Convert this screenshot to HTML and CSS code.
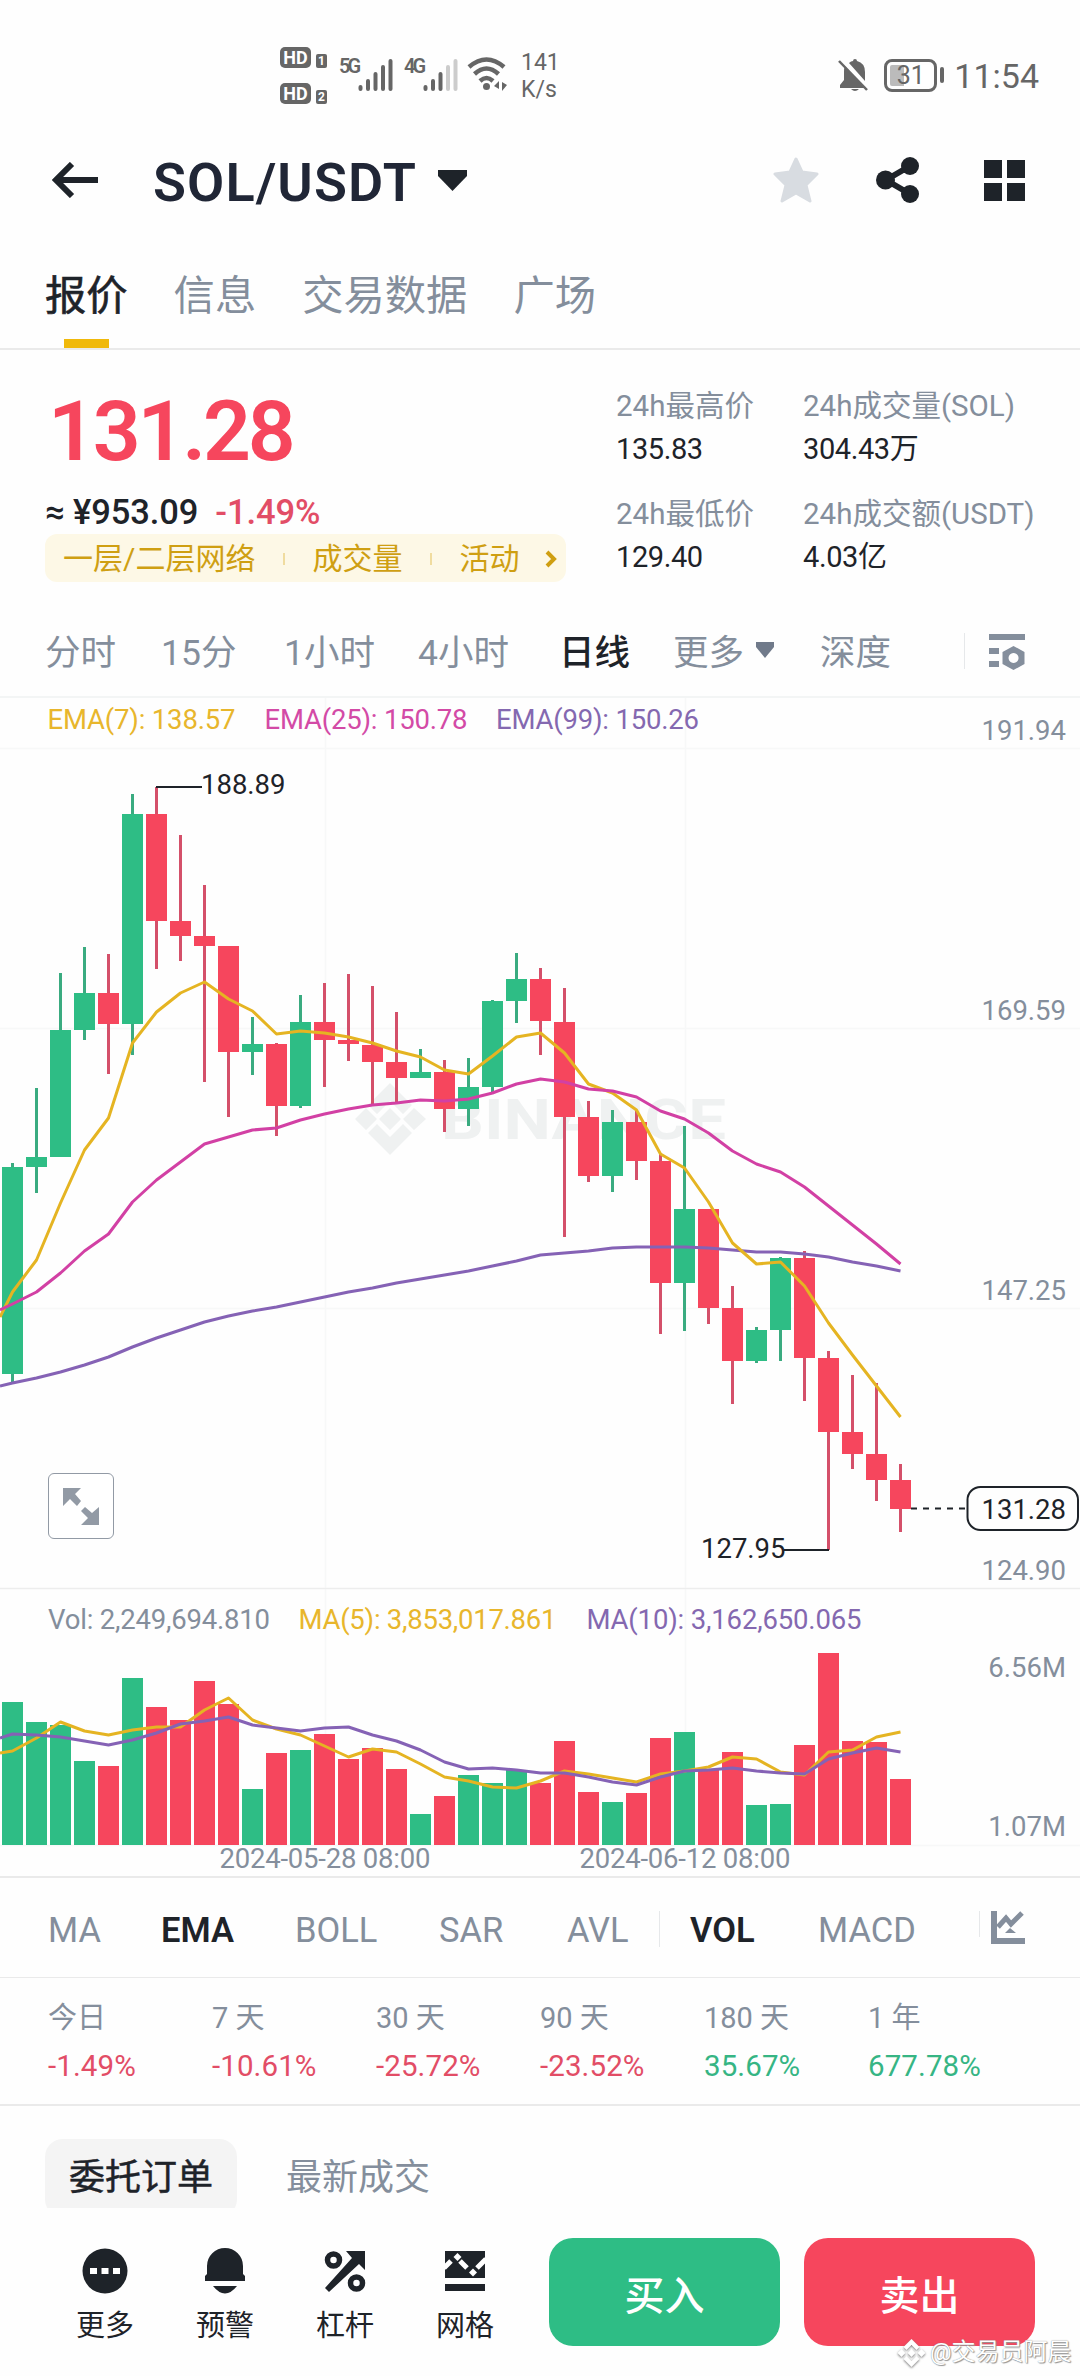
FILE: index.html
```html
<!DOCTYPE html>
<html lang="zh-CN">
<head>
    <meta charset="UTF-8">
    <meta name="viewport" content="width=device-width, initial-scale=1.0">
    <title>SOL/USDT</title>
    <link rel="stylesheet" href="styles.css">
</head>
<body>
    <div class="status-bar">
        <div class="status-left">
            <div class="hd-list">
                <div class="hd"><span class="hd-label">HD</span><span class="hd-sim">1</span></div>
                <div class="hd"><span class="hd-label">HD</span><span class="hd-sim">2</span></div>
            </div>
            <span class="net">5G</span>
            <svg class="signal" width="36" height="34" viewBox="0 0 36 34" fill="none" stroke="#666" stroke-width="4" stroke-linecap="round">
                <path d="M2.5 29v2M10 23v8M17.500 16v15M25 9v22M32.500 3v28"/>
            </svg>
            <span class="net net-4g">4G</span>
            <svg class="signal" width="36" height="34" viewBox="0 0 36 34" fill="none" stroke="#666" stroke-width="4" stroke-linecap="round">
                <path d="M2.500 29v2M10 23v8M17.500 16v15"/>
                <path d="M25 9v22M32.500 3v28" stroke="#ccc"/>
            </svg>
            <svg class="wifi" width="42" height="34" viewBox="0 0 42 34" fill="none" stroke="#666" stroke-width="4.500">
                <path d="M2 10q17.500-15 35 0M7.500 17q12-11 24 0M13 24q6.500-6 13 0"/>
                <circle cx="19.500" cy="29.500" r="3.500" fill="#666" stroke="none"/>
                <path d="M27 29l5-5v8zM40 28l-5-3v9z" fill="#666" stroke="none"/>
            </svg>
            <div class="speed"><span>141</span><span>K/s</span></div>
        </div>
        <div class="status-right">
            <svg width="32" height="34" viewBox="0 0 32 34" fill="#666">
                <path d="M5 6L27 30H2v-3l4-5V14q0-4 1-6M11 5q2-2 4-2 0-2 2-2t2 2q8 2 8 11v9zM13 31h8q-4 4-8 0z"/>
                <path d="M1 3l28 29" stroke="#666" stroke-width="2.500"/>
            </svg>
            <div class="battery"><span>31</span></div>
            <span class="clock">11:54</span>
        </div>
    </div>

    <header class="header">
        <svg class="back" width="46" height="36" viewBox="0 0 46 36" fill="none" stroke="#1e2329" stroke-width="6">
            <path d="M46 18H5M20 2L4 18l16 16"/>
        </svg>
        <h1 class="pair">SOL/USDT</h1>
        <svg class="caret" width="29" height="21" viewBox="0 0 29 21" fill="#1e2329"><path d="M0 0h29v6L14.500 21 0 6z"/></svg>
        <div class="header-actions">
            <svg width="46" height="46" viewBox="0 0 46 46" fill="#d8dce1" stroke="#d8dce1" stroke-width="3" stroke-linejoin="round">
                <path d="M23 2l6 13 15 2-11 11 4 16-14-8-14 8 4-16L2 17l15-2z"/>
            </svg>
            <svg width="44" height="46" viewBox="0 0 44 46" fill="#1e2329">
                <path d="M34 9L10 23l24 14" fill="none" stroke="#1e2329" stroke-width="6"/>
                <circle cx="34" cy="9" r="9"/><circle cx="9.500" cy="23" r="9.500"/><circle cx="34" cy="37" r="9"/>
            </svg>
            <svg width="41" height="41" viewBox="0 0 41 41" fill="#1e2329">
                <path d="M0 0h18v18H0zM23 0h18v18H23zM0 23h18v18H0zM23 23h18v18H23z"/>
            </svg>
        </div>
    </header>

    <nav class="tabs">
        <span class="tab active">报价</span>
        <span class="tab">信息</span>
        <span class="tab">交易数据</span>
        <span class="tab">广场</span>
    </nav>

    <section class="ticker">
        <div class="ticker-main">
            <div class="price">131.28</div>
            <div class="fiat">≈ ¥953.09<span class="change">-1.49%</span></div>
            <div class="tags">
                <span>一层/二层网络</span><i></i><span>成交量</span><i></i><span>活动</span>
                <svg width="12" height="18" viewBox="0 0 12 18" fill="none" stroke="#cf9f12" stroke-width="4"><path d="M2 2l7 7-7 7"/></svg>
            </div>
        </div>
        <dl class="stats">
            <div><dt>24h最高价</dt><dd>135.83</dd></div>
            <div><dt>24h成交量(SOL)</dt><dd>304.43万</dd></div>
            <div><dt>24h最低价</dt><dd>129.40</dd></div>
            <div><dt>24h成交额(USDT)</dt><dd>4.03亿</dd></div>
        </dl>
    </section>

    <div class="intervals">
        <span>分时</span>
        <span>15分</span>
        <span>1小时</span>
        <span>4小时</span>
        <span class="active">日线</span>
        <span>更多<svg class="more-caret" width="18" height="16" viewBox="0 0 18 16" fill="#707a8a"><path d="M0 0h18v5L9 16 0 5z"/></svg></span>
        <span>深度</span>
        <svg class="settings" width="36" height="36" viewBox="0 0 36 36" fill="#848e9c">
            <path d="M0 0h36v6H0zM0 14h10v6H0zM0 27h10v6H0z"/>
            <path fill-rule="evenodd" d="M24.500 12l11 6v12l-11 6-11-6V18zM24.500 19a5 5 0 1 0 .1 0z"/>
        </svg>
    </div>

    <div class="chart">
        <svg id="chart" width="1080" height="1178" viewBox="0 698 1080 1178">
            <g class="grid">
                <path d="M0 748.500H1080M0 1028.500H1080M0 1308.500H1080M0 1845.500H1080M325.500 698V1845M685.500 698V1845"/>
                <path class="grid-strong" d="M0 1588.500H1080"/>
            </g>
            <g class="logo">
                <path d="M390 1083l22 22-9 9-13-13-13 13-9-9zM390 1155l-22-22 9-9 13 13 13-13 9 9zM390 1108l11 11-11 11-11-11zM366 1108l11 11-11 11-11-11zM414 1108l12 11-12 11-11-11z"/>
                <text x="441" y="1139" textLength="285" lengthAdjust="spacingAndGlyphs">BINANCE</text>
            </g>
            <g id="candles"></g>
            <g id="volumes"></g>
            <g id="lines"></g>
            <g class="legend">
                <text class="ema7" x="47.500" y="729" textLength="188">EMA(7): 138.57</text>
                <text class="ema25" x="264.500" y="729" textLength="203">EMA(25): 150.78</text>
                <text class="ema99" x="496" y="729" textLength="203">EMA(99): 150.26</text>
                <text class="axis" x="48" y="1629" textLength="222">Vol: 2,249,694.810</text>
                <text class="ema7" x="298.500" y="1629" textLength="258">MA(5): 3,853,017.861</text>
                <text class="ema99" x="586.500" y="1629" textLength="275">MA(10): 3,162,650.065</text>
            </g>
            <g class="axis" text-anchor="end">
                <text x="1066" y="740">191.94</text>
                <text x="1066" y="1020">169.59</text>
                <text x="1066" y="1300">147.25</text>
                <text x="1066" y="1580">124.90</text>
                <text x="1066" y="1677">6.56M</text>
                <text x="1066" y="1836">1.07M</text>
            </g>
            <g class="axis" text-anchor="middle">
                <text x="325" y="1868" textLength="211">2024-05-28 08:00</text>
                <text x="685" y="1868" textLength="211">2024-06-12 08:00</text>
            </g>
            <g class="marks">
                <path d="M156 787H202M784 1550H829"/>
                <path d="M911 1508.500H967" stroke-dasharray="6 6"/>
                <rect x="967.500" y="1487" width="110.500" height="43" rx="13"/>
                <text x="201" y="794">188.89</text>
                <text x="701" y="1558">127.95</text>
                <text x="1066" y="1519" text-anchor="end">131.28</text>
            </g>
        </svg>
        <button class="expand" aria-label="expand">
            <svg width="36" height="37" viewBox="0 0 36 37" fill="#929aa5">
                <path d="M0 0h18l-6 6 6 7-4 5-7-7-7 7zM36 37H18l7-7-7-7 4-4 7 6 7-6z"/>
            </svg>
        </button>
    </div>

    <div class="indicators">
        <span>MA</span>
        <span class="active">EMA</span>
        <span>BOLL</span>
        <span>SAR</span>
        <span class="split">AVL</span>
        <span class="active">VOL</span>
        <span class="split">MACD</span>
        <svg class="indicator-icon" width="34" height="33" viewBox="0 0 34 33" fill="#848e9c">
            <path d="M0 0h6v27h28v6H0z"/>
            <path d="M7 16L15 7l5 6L31 2" fill="none" stroke="#848e9c" stroke-width="5"/>
            <path d="M14 22l5-5 6 5z"/>
        </svg>
    </div>

    <div class="performance">
        <div><span>今日</span><b class="down">-1.49%</b></div>
        <div><span>7 天</span><b class="down">-10.61%</b></div>
        <div><span>30 天</span><b class="down">-25.72%</b></div>
        <div><span>90 天</span><b class="down">-23.52%</b></div>
        <div><span>180 天</span><b class="up">35.67%</b></div>
        <div><span>1 年</span><b class="up">677.78%</b></div>
    </div>

    <div class="orders">
        <span class="order-tab active">委托订单</span>
        <span class="order-tab">最新成交</span>
    </div>

    <footer class="bottom-bar">
        <div class="shortcuts">
            <div class="shortcut">
                <svg width="46" height="46" viewBox="0 0 46 46"><circle cx="23" cy="23" r="22.500" fill="#1e2329"/><path d="M8 20h7v6H8zM19.500 20h7v6h-7zM31 20h7v6h-7z" fill="#fff"/></svg>
                <span>更多</span>
            </div>
            <div class="shortcut">
                <svg width="46" height="46" viewBox="0 0 46 46" fill="#1e2329"><path d="M5 18a18 18 0 0 1 36 0v8l2 2v5H3v-5l2-2zM11 38h24q-12 15-24 0z"/></svg>
                <span>预警</span>
            </div>
            <div class="shortcut">
                <svg width="46" height="46" viewBox="0 0 46 46" fill="#1e2329">
                    <path d="M24 3h19v19l-6-6L7 44l-4-4 27-30z"/>
                    <g fill="#fff" stroke="#1e2329" stroke-width="5.500"><circle cx="11.500" cy="12" r="6"/><circle cx="34.500" cy="35" r="6"/></g>
                </svg>
                <span>杠杆</span>
            </div>
            <div class="shortcut">
                <svg width="46" height="46" viewBox="0 0 46 46">
                    <path d="M3 3h40v27H3zM3 36h40v7H3z" fill="#1e2329"/>
                    <path d="M2 20l7-7M18 13l7 7M35 20l9-9" stroke="#fff" stroke-width="5"/>
                    <path d="M15.500 5l4 4-4 4-4-4zM31 20.500l4 4-4 4-4-4z" fill="#fff"/>
                </svg>
                <span>网格</span>
            </div>
        </div>
        <button class="trade buy">买入</button>
        <button class="trade sell">卖出</button>
        <div class="author">
            <svg width="29" height="30" viewBox="0 0 29 30"><path d="M14.500 1l8 8-3 3-5-5-5 5-3-3zM14.500 29l-8-8 3-3 5 5 5-5 3 3zM14.500 11l4 4-4 4-4-4zM4.500 11l4 4-4 4-4-4zM24.500 11l4 4-4 4-4-4z"/></svg>
            <span>@交易员阿晨</span>
        </div>
    </footer>

    <script src="chart.js"></script>
</body>
</html>
```
FILE: styles.css
```css
* {
    box-sizing: border-box;
}
body {
    margin: 0;
    width: 1080px;
    height: 2376px;
    overflow: hidden;
    background-color: #fefefe;
    color: #1e2329;
    font-family: Roboto, "Noto Sans CJK SC", sans-serif;
    line-height: 1;
}
svg {
    display: block;
    flex-shrink: 0;
}
button {
    padding: 0;
    border: none;
    font-family: inherit;
}

/* status bar */
.status-bar {
    display: flex;
    justify-content: space-between;
    height: 110px;
    padding: 47px 41px 0 280px;
    color: #666;
}
.status-left {
    display: flex;
    align-items: flex-start;
}
.hd-list {
    display: flex;
    flex-direction: column;
    gap: 15px;
    width: 59px;
}
.hd {
    display: flex;
    align-items: flex-end;
    gap: 5px;
}
.hd-label {
    width: 31px;
    height: 21px;
    border-radius: 5px;
    background-color: #666;
    color: #fff;
    font-size: 18px;
    font-weight: 700;
    line-height: 21px;
    text-align: center;
}
.hd-sim {
    width: 11px;
    height: 14px;
    border-radius: 2px;
    background-color: #666;
    color: #fff;
    font-size: 12px;
    font-weight: 700;
    line-height: 14px;
    text-align: center;
}
.net {
    width: 19px;
    margin-top: 8px;
    font-size: 20px;
    font-weight: 600;
    letter-spacing: -3px;
    line-height: 22px;
}
.net-4g {
    margin-left: 10px;
}
.signal {
    margin-top: 11px;
}
.wifi {
    margin: 10px 0 0 8px;
}
.speed {
    display: flex;
    flex-direction: column;
    gap: 4px;
    margin: 4px 0 0 12px;
    font-size: 23px;
}
.status-right {
    display: flex;
    align-items: center;
    height: 56px;
    gap: 14px;
}
.battery {
    position: relative;
    width: 53px;
    height: 33px;
    padding: 3px;
    border: 3px solid #666;
    border-radius: 8px;
    background: linear-gradient(90deg, #bbb 14px, #fff 14px) content-box;
    text-align: center;
    font-size: 25px;
    line-height: 22px;
}
.battery::after {
    content: "";
    position: absolute;
    top: 5px;
    right: -10px;
    width: 4px;
    height: 16px;
    border-radius: 2px;
    background-color: #666;
}
.clock {
    margin-left: 3px;
    padding-top: 2px;
    font-size: 34px;
}

/* header */
.header {
    display: flex;
    align-items: center;
    height: 140px;
    padding: 0 55px 0 52px;
}
.pair {
    width: 263px;
    margin: 6px 22px 0 55px;
    color: #202636;
    font-size: 54px;
    font-weight: 600;
    letter-spacing: 1.1px;
    white-space: nowrap;
}
.header-actions {
    display: flex;
    align-items: center;
    margin-left: auto;
    gap: 57px;
}
.header-actions svg:last-child {
    margin-left: 7px;
}

/* tabs */
.tabs {
    display: flex;
    gap: 46px;
    height: 100px;
    padding: 25px 45px 0;
    border-bottom: 2px solid #eaeaea;
    color: #848e9c;
    font-size: 41.3px;
}
.tab {
    position: relative;
    line-height: 42px;
}
.tab.active {
    color: #1e2329;
    -webkit-text-stroke: 0.6px #1e2329;
}
.tab.active::after {
    content: "";
    position: absolute;
    left: 19px;
    top: 64px;
    width: 45px;
    height: 9px;
    background-color: #f0b90b;
}

/* ticker */
.ticker {
    display: flex;
    height: 260px;
    padding: 40px 0 0 45px;
}
.ticker-main {
    width: 571px;
}
.price {
    height: 84px;
    padding-left: 3px;
    color: #f6465d;
    font-size: 84px;
    font-weight: 600;
    letter-spacing: -3.2px;
}
.fiat {
    height: 36px;
    margin-top: 20px;
    font-size: 34.5px;
    font-weight: 500;
    letter-spacing: -0.1px;
    line-height: 36px;
}
.change {
    margin-left: 17px;
    color: #e24d66;
}
.tags {
    display: flex;
    align-items: center;
    width: 521px;
    height: 48px;
    margin-top: 4px;
    padding: 2px 0 0 18px;
    border-radius: 12px;
    background-color: #fdf8e6;
    color: #cf9f12;
    font-size: 30px;
}
.tags i {
    width: 2px;
    height: 12px;
    margin: 0 27px 0 28px;
    background-color: #f0dc9f;
}
.tags svg {
    margin-left: 26px;
}
.stats {
    display: grid;
    grid-template-columns: 187px auto;
    align-content: start;
    row-gap: 34px;
    margin: 1px 0 0;
    white-space: nowrap;
}
.stats dt {
    height: 30px;
    color: #848e9c;
    font-size: 29.5px;
    line-height: 30px;
}
.stats dd {
    height: 30px;
    margin: 13px 0 1px;
    font-size: 29px;
    line-height: 30px;
    letter-spacing: -0.4px;
}

/* intervals */
.intervals {
    position: relative;
    display: grid;
    grid-template-columns: 116px 123px 134px 141px 114px 147px 143px auto;
    align-items: center;
    height: 88px;
    padding: 2px 0 0 45px;
    border-bottom: 2px solid #f3f5f5;
    color: #848e9c;
    font-size: 35.5px;
}
.intervals span {
    display: flex;
    white-space: nowrap;
}
.intervals .active {
    color: #1e2329;
    font-weight: 500;
}
.more-caret {
    margin: 6px 0 0 12px;
}
.settings {
    margin: -4px 0 0 26px;
}
.intervals::after {
    content: "";
    position: absolute;
    left: 964px;
    top: 23px;
    width: 1px;
    height: 36px;
    background-color: #e6e8ea;
}

/* chart */
.chart {
    position: relative;
    height: 1180px;
    border-bottom: 2px solid #eaeaea;
}
.chart text {
    font-size: 27.5px;
}
.grid {
    fill: none;
    stroke: #f7f8f8;
    stroke-width: 1.5;
}
.grid-strong {
    stroke: #ededed;
}
.logo {
    fill: #eff1f1;
}
.chart .logo text {
    font-size: 56px;
    font-weight: 700;
}
.axis {
    fill: #848e9c;
}
.legend .ema7 {
    fill: #e8b62c;
}
.legend .ema25 {
    fill: #d34aa6;
}
.legend .ema99 {
    fill: #8468b0;
}
.marks {
    fill: none;
    stroke: #1e2329;
    stroke-width: 2;
}
.marks text {
    fill: #1e2329;
    stroke: none;
}
.body-up {
    fill: #2ebd85;
}
.body-down {
    fill: #f6465d;
}
.wick-up {
    fill: #3aab80;
}
.wick-down {
    fill: #d4506a;
}
.line {
    fill: none;
    stroke-width: 3;
    stroke-linejoin: round;
}
.line.yellow {
    stroke: #e5b422;
}
.line.pink {
    stroke: #d240a4;
}
.line.purple {
    stroke: #8562b5;
}
.expand {
    position: absolute;
    left: 48px;
    top: 775px;
    display: flex;
    align-items: center;
    justify-content: center;
    width: 66px;
    height: 66px;
    border: 1.5px solid #929aa5;
    border-radius: 6px;
    background-color: #fff;
}

/* indicators */
.indicators {
    display: grid;
    grid-template-columns: 113px 134px 144px 128px 123px 128px 146px auto;
    align-items: center;
    height: 100px;
    padding: 5px 0 0 48px;
    border-bottom: 1px solid #eaeaea;
    color: #848e9c;
    font-size: 34.5px;
}
.indicators .active {
    color: #1e2329;
    font-weight: 600;
}
.split {
    position: relative;
}
.split::after {
    content: "";
    position: absolute;
    right: 30px;
    top: -2px;
    width: 1px;
    height: 36px;
    background-color: #e6e8ea;
}
.split:nth-of-type(7)::after {
    right: -16px;
    height: 26px;
}
.indicator-icon {
    margin: -5px 0 0 27px;
}

/* performance */
.performance {
    display: grid;
    grid-template-columns: repeat(6, 164px);
    height: 128px;
    padding: 25px 0 0 48px;
    border-bottom: 2px solid #eaeaea;
}
.performance span {
    display: block;
    height: 30px;
    margin-bottom: 19px;
    color: #848e9c;
    font-size: 29px;
    line-height: 30px;
}
.performance b {
    font-size: 29.5px;
    font-weight: 400;
    letter-spacing: 0.1px;
}
.up {
    color: #36b584;
}
.down {
    color: #e24d66;
}

/* orders */
.orders {
    display: flex;
    gap: 25px;
    height: 102px;
    padding: 33px 0 0 45px;
    overflow: hidden;
}
.order-tab {
    height: 78px;
    padding: 0 24px;
    color: #848e9c;
    font-size: 36px;
    line-height: 78px;
}
.order-tab.active {
    border-radius: 18px;
    background-color: #f4f4f4;
    color: #1e2329;
    -webkit-text-stroke: 0.5px #1e2329;
}

/* bottom bar */
.bottom-bar {
    position: relative;
    display: flex;
    gap: 24px;
    height: 168px;
    padding: 30px 45px 0;
}
.shortcuts {
    display: flex;
    width: 480px;
}
.shortcut {
    display: flex;
    flex-direction: column;
    align-items: center;
    gap: 18px;
    width: 120px;
    padding-top: 10px;
    font-size: 29px;
}
.trade {
    width: 231px;
    height: 108px;
    border-radius: 24px;
    color: #fff;
    font-size: 40px;
    font-weight: 500;
    line-height: 118px;
}
.buy {
    background-color: #2ebd85;
}
.sell {
    background-color: #f6465d;
}
.author {
    position: absolute;
    left: 897px;
    top: 130px;
    display: flex;
    gap: 4px;
    color: #fff;
    font-size: 24px;
    line-height: 28px;
    white-space: nowrap;
    text-shadow: 0 0 1px #777, 1px 1px 1px #999;
}
.author svg {
    fill: #fff;
    filter: drop-shadow(0 1px 1px #777);
}
```
FILE: chart.js
```js
// [direction, body top, body bottom, wick top, wick bottom, volume top]
const candles = [
    ["up", 1167, 1374, 1163, 1384, 1702],
    ["up", 1157, 1167, 1088, 1193, 1722],
    ["up", 1030, 1157, 973, 1157, 1725],
    ["up", 993, 1030, 947, 1040, 1761],
    ["down", 993, 1024, 954, 1074, 1766],
    ["up", 814, 1024, 794, 1055, 1678],
    ["down", 814, 921, 787, 969, 1707],
    ["down", 921, 936, 835, 961, 1720],
    ["down", 936, 946, 885, 1082, 1681],
    ["down", 946, 1052, 946, 1117, 1704],
    ["up", 1044, 1052, 1017, 1075, 1789],
    ["down", 1044, 1106, 1043, 1136, 1753],
    ["up", 1022, 1106, 995, 1108, 1750],
    ["down", 1022, 1040, 983, 1087, 1734],
    ["down", 1040, 1044, 974, 1061, 1759],
    ["down", 1045, 1062, 986, 1104, 1748],
    ["down", 1062, 1078, 1012, 1104, 1769],
    ["up", 1072, 1078, 1049, 1078, 1814],
    ["down", 1072, 1109, 1060, 1132, 1796],
    ["up", 1087, 1109, 1058, 1126, 1775],
    ["up", 1001, 1087, 1000, 1094, 1783],
    ["up", 979, 1001, 953, 1023, 1770],
    ["down", 979, 1021, 968, 1055, 1783],
    ["down", 1022, 1117, 988, 1237, 1741],
    ["down", 1117, 1176, 1101, 1182, 1792],
    ["up", 1122, 1176, 1110, 1192, 1802],
    ["down", 1122, 1161, 1110, 1180, 1793],
    ["down", 1161, 1283, 1153, 1334, 1738],
    ["up", 1209, 1283, 1126, 1331, 1732],
    ["down", 1209, 1308, 1209, 1324, 1770],
    ["down", 1308, 1361, 1286, 1404, 1752],
    ["up", 1330, 1361, 1327, 1363, 1805],
    ["up", 1258, 1330, 1257, 1361, 1804],
    ["down", 1258, 1358, 1251, 1401, 1745],
    ["down", 1358, 1432, 1351, 1550, 1653],
    ["down", 1432, 1454, 1375, 1469, 1741],
    ["down", 1454, 1480, 1383, 1501, 1742],
    ["down", 1480, 1509, 1464, 1532, 1779]
];

// first value is the point at the left edge, then one per candle
const lines = {
    purple: [1386, 1383, 1378, 1372, 1365, 1357, 1347, 1338, 1330, 1322, 1316, 1311, 1307, 1302, 1297, 1292, 1288, 1283, 1279, 1275, 1271, 1266, 1261, 1255, 1253, 1251, 1248, 1247, 1247, 1247, 1248, 1250, 1252, 1252, 1254, 1257, 1262, 1266, 1271],
    yellow: [1317, 1292, 1260, 1203, 1150, 1118, 1043, 1012, 993, 982, 999, 1011, 1034, 1031, 1033, 1037, 1043, 1051, 1057, 1070, 1074, 1056, 1037, 1033, 1053, 1084, 1093, 1110, 1154, 1168, 1202, 1243, 1264, 1262, 1286, 1323, 1355, 1386, 1417],
    pink: [1310, 1304, 1292, 1273, 1251, 1234, 1202, 1180, 1162, 1144, 1137, 1130, 1128, 1120, 1114, 1109, 1105, 1103, 1100, 1101, 1099, 1093, 1084, 1079, 1082, 1089, 1091, 1097, 1111, 1119, 1133, 1151, 1164, 1172, 1187, 1206, 1225, 1244, 1264]
};
const volumeLines = {
    yellow: [1753, 1751, 1738, 1722, 1731, 1735, 1730, 1727, 1727, 1710, 1698, 1720, 1729, 1735, 1746, 1757, 1749, 1752, 1764, 1777, 1781, 1787, 1788, 1781, 1771, 1774, 1778, 1782, 1774, 1771, 1767, 1757, 1759, 1772, 1775, 1752, 1750, 1737, 1732],
    purple: [1738, 1734, 1735, 1737, 1741, 1745, 1740, 1733, 1724, 1721, 1717, 1725, 1728, 1731, 1728, 1727, 1735, 1741, 1750, 1762, 1769, 1768, 1770, 1773, 1773, 1777, 1782, 1785, 1777, 1771, 1770, 1768, 1771, 1773, 1774, 1759, 1753, 1748, 1752]
};

const step = 24;
const firstX = 12.5;
const volumeBase = 1845;

function rect(x, top, width, bottom, cls) {
    return `<rect class="${cls}" x="${x}" y="${top}" width="${width}" height="${bottom - top}"/>`;
}

function polyline(values, color) {
    const points = values.map((y, i) => `${i === 0 ? 0 : firstX + (i - 1) * step},${y}`).join(" ");
    return `<polyline class="line ${color}" points="${points}"/>`;
}

let candleMarkup = "";
let volumeMarkup = "";
candles.forEach(([dir, top, bottom, high, low, volume], i) => {
    const x = firstX + i * step;
    candleMarkup += rect(x - 1.5, high, 3, low, "wick-" + dir);
    candleMarkup += rect(x - 10.5, top, 21, bottom, "body-" + dir);
    volumeMarkup += rect(x - 10.5, volume, 21, volumeBase, "body-" + dir);
});

document.getElementById("candles").innerHTML = candleMarkup;
document.getElementById("volumes").innerHTML = volumeMarkup;
document.getElementById("lines").innerHTML =
    Object.keys(lines).map(c => polyline(lines[c], c)).join("") +
    Object.keys(volumeLines).map(c => polyline(volumeLines[c], c)).join("");
```
